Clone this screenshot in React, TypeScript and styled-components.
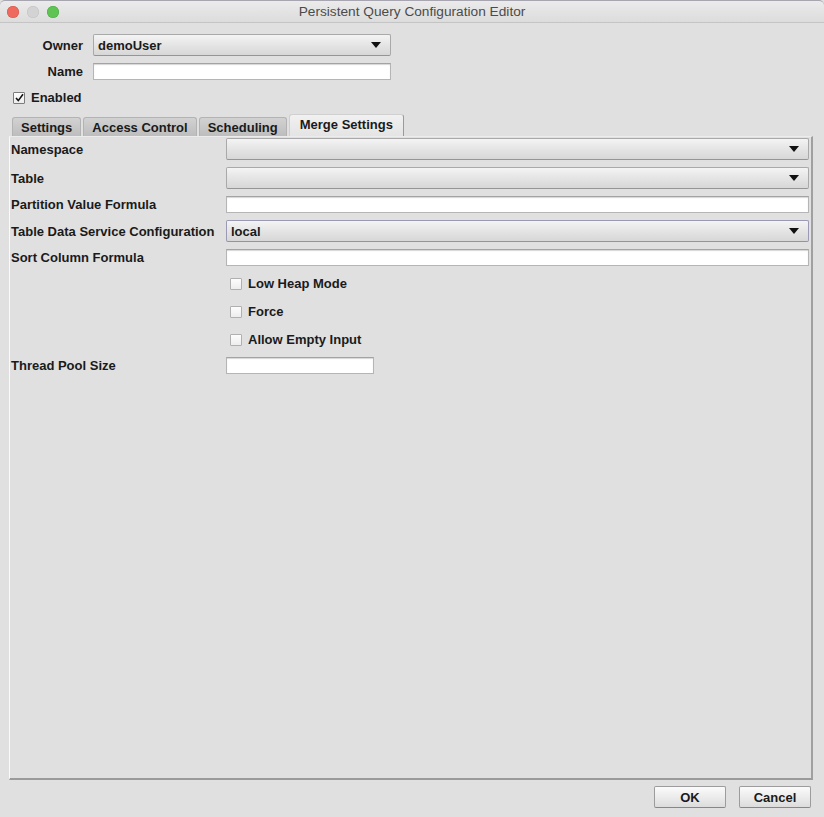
import React from 'react';
import styled, { createGlobalStyle } from 'styled-components';

const GlobalStyle = createGlobalStyle`
  html, body {
    margin: 0;
    padding: 0;
    background: #dfdfdf;
  }
  * { box-sizing: border-box; }
`;

const Window = styled.div`
  width: 824px;
  height: 817px;
  display: flex;
  flex-direction: column;
  background: #e0e0e0;
  font-family: "Liberation Sans", Arial, sans-serif;
  font-size: 13px;
  color: #1a1a1a;
  overflow: hidden;
`;

const TitleBar = styled.div`
  height: 23px;
  flex: none;
  display: flex;
  align-items: center;
  position: relative;
  background: linear-gradient(#ebebeb, #dcdcdc);
  border-top: 1px solid #a7a5b0;
  border-bottom: 1px solid #c4c4c4;
  border-top-right-radius: 5px;
  border-top-left-radius: 5px;
`;

const Lights = styled.div`
  display: flex;
  gap: 8px;
  padding-left: 7px;
`;

const Light = styled.span<{ $color: string; $edge: string }>`
  width: 12px;
  height: 12px;
  border-radius: 50%;
  background: ${p => p.$color};
  box-shadow: inset 0 0 0 0.5px ${p => p.$edge};
`;

const Title = styled.div`
  position: absolute;
  left: 0;
  right: 0;
  text-align: center;
  color: #4b4b4b;
  font-size: 13.7px;
  pointer-events: none;
`;

const Body = styled.div`
  flex: 1;
  display: flex;
  flex-direction: column;
  padding: 11px 11px 9px 9px;
`;

const TopGrid = styled.div`
  display: grid;
  grid-template-columns: 74px 298px;
  column-gap: 10px;
  row-gap: 7px;
  align-items: center;
`;

const Label = styled.label<{ $right?: boolean }>`
  font-weight: bold;
  white-space: nowrap;
  text-align: ${p => (p.$right ? 'right' : 'left')};
`;

const Combo = styled.div<{ $focus?: boolean }>`
  height: 22px;
  display: flex;
  align-items: center;
  justify-content: space-between;
  padding: 0 9px 0 4px;
  border: 1px solid ${p => (p.$focus ? '#9a9ab4' : '#a9a9a9')};
  border-bottom-color: #959595;
  border-radius: 2px;
  background: linear-gradient(#f4f4f4, #e6e6e6 45%, #d7d7d7);
  font-weight: bold;
`;

const Arrow = styled.span`
  width: 0;
  height: 0;
  border-left: 5px solid transparent;
  border-right: 5px solid transparent;
  border-top: 6px solid #111;
`;

const Field = styled.div<{ $width?: number }>`
  height: 17px;
  width: ${p => (p.$width ? `${p.$width}px` : 'auto')};
  background: #fff;
  border: 1px solid #b5b5b5;
  border-top-color: #a3a3a3;
  box-shadow: inset 0 1px 1px #d6d6d6;
`;

const CheckRow = styled.div<{ $indent?: number }>`
  display: flex;
  align-items: center;
  gap: 6px;
  padding-left: ${p => p.$indent ?? 0}px;
`;

const Box = styled.span<{ $checked?: boolean }>`
  width: 12px;
  height: 12px;
  flex: none;
  display: flex;
  align-items: center;
  justify-content: center;
  background: linear-gradient(#fdfdfd, #ededed);
  border: 1px solid ${p => (p.$checked ? '#7c7c7c' : '#b0b0b0')};
  border-radius: 1px;
`;

const EnabledRow = styled(CheckRow)`
  margin-top: 10px;
  padding-left: 4px;
`;

const Tabs = styled.div`
  display: flex;
  align-items: flex-end;
  gap: 2px;
  margin-top: 9px;
  padding-left: 3px;
  height: 22px;
`;

const Tab = styled.div<{ $active?: boolean }>`
  height: ${p => (p.$active ? '22px' : '19px')};
  padding: ${p => (p.$active ? '0 10px 3px' : '1px 8px 0')};
  display: flex;
  align-items: center;
  font-weight: bold;
  border: 1px solid ${p => (p.$active ? '#d0d0d0' : '#b3b3b3')};
  border-bottom: none;
  border-right-color: ${p => (p.$active ? '#9a9a9a' : '#b3b3b3')};
  border-radius: 3px 3px 0 0;
  background: ${p =>
    p.$active ? 'linear-gradient(#f1f1f1, #e4e4e4)' : 'linear-gradient(#d2d2d2, #bdbdbd)'};
`;

const Panel = styled.div`
  flex: 1;
  display: grid;
  grid-template-columns: 215px 1fr;
  grid-template-rows: 22px 22px 17px 22px 17px 21px 21px 21px 17px;
  row-gap: 7px;
  align-content: start;
  align-items: center;
  padding: 1px 2px 0 1px;
  border-left: 1px solid #fafafa;
  border-top: 1px solid #ececec;
  border-right: 2px solid #a0a0a0;
  border-bottom: 2px solid #9a9a9a;
  background: #e0e0e0;
`;

const Spacer = styled.div``;

const Footer = styled.div`
  display: flex;
  justify-content: flex-end;
  gap: 13px;
  margin-top: 6px;
  margin-right: 2px;
`;

const Button = styled.button`
  width: 72px;
  height: 22px;
  font-family: inherit;
  font-size: 13px;
  font-weight: bold;
  color: #1a1a1a;
  border: 1px solid #9c9c9c;
  border-bottom-color: #878787;
  border-radius: 2px;
  background: linear-gradient(#fbfbfb, #ececec 50%, #dcdcdc);
  padding: 0;
`;

const Check = () => (
  <svg width="9" height="9" viewBox="0 0 9 9">
    <path d="M1 5 L3.3 7.6 L8 1.2" fill="none" stroke="#111" strokeWidth="1.6" />
  </svg>
);

export default function App() {
  const tabs = ['Settings', 'Access Control', 'Scheduling', 'Merge Settings'];
  const options = ['Low Heap Mode', 'Force', 'Allow Empty Input'];

  return (
    <>
      <GlobalStyle />
      <Window>
        <TitleBar>
          <Lights>
            <Light $color="#ee6a5f" $edge="#d5544a" />
            <Light $color="#d3d3d3" $edge="#c0c0c0" />
            <Light $color="#5fc454" $edge="#4aa83f" />
          </Lights>
          <Title>Persistent Query Configuration Editor</Title>
        </TitleBar>
        <Body>
          <TopGrid>
            <Label $right>Owner</Label>
            <Combo>
              demoUser
              <Arrow />
            </Combo>
            <Label $right>Name</Label>
            <Field />
          </TopGrid>

          <EnabledRow>
            <Box $checked>
              <Check />
            </Box>
            <Label>Enabled</Label>
          </EnabledRow>

          <Tabs>
            {tabs.map((t, i) => (
              <Tab key={`tab-${i}`} $active={t === 'Merge Settings'}>
                {t}
              </Tab>
            ))}
          </Tabs>

          <Panel>
            <Label>Namespace</Label>
            <Combo>
              <span />
              <Arrow />
            </Combo>
            <Label>Table</Label>
            <Combo>
              <span />
              <Arrow />
            </Combo>
            <Label>Partition Value Formula</Label>
            <Field />
            <Label>Table Data Service Configuration</Label>
            <Combo $focus>
              local
              <Arrow />
            </Combo>
            <Label>Sort Column Formula</Label>
            <Field />
            {options.map((o, i) => (
              <React.Fragment key={`opt-${i}`}>
                <Spacer />
                <CheckRow $indent={4}>
                  <Box />
                  <Label>{o}</Label>
                </CheckRow>
              </React.Fragment>
            ))}
            <Label>Thread Pool Size</Label>
            <Field $width={148} />
          </Panel>

          <Footer>
            <Button>OK</Button>
            <Button>Cancel</Button>
          </Footer>
        </Body>
      </Window>
    </>
  );
}
